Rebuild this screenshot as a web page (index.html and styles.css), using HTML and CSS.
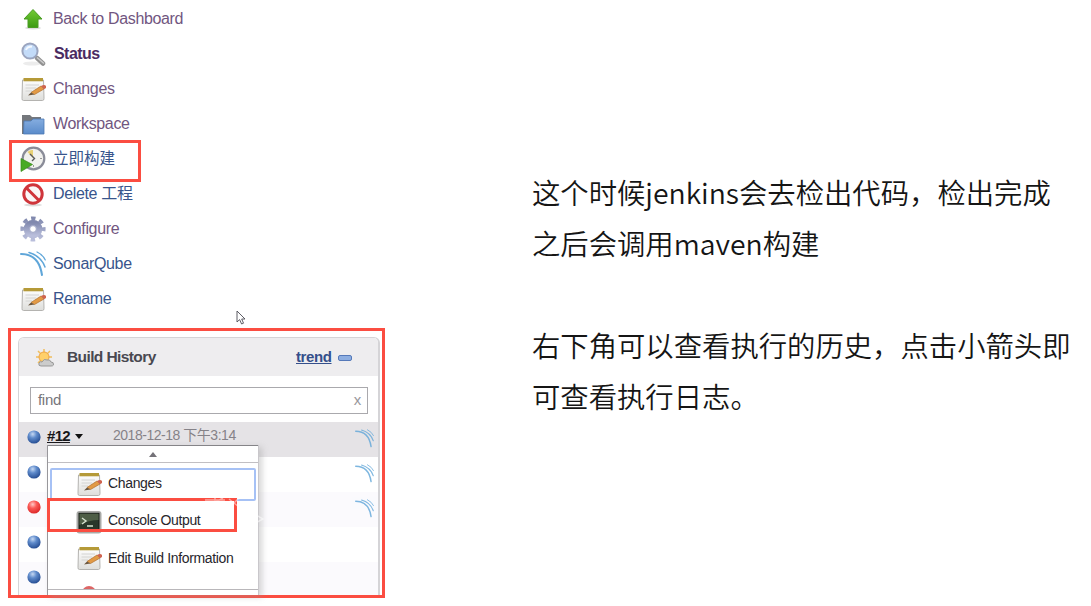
FILE: index.html
```
<!DOCTYPE html>
<html lang="zh-CN">
<head>
<meta charset="utf-8">
<title>Jenkins</title>
<link rel="stylesheet" href="styles.css">
</head>
<body>
<svg class="defs" width="0" height="0" aria-hidden="true">
  <defs>
    <linearGradient id="green" x1="0" y1="0" x2="0" y2="1"><stop offset="0" stop-color="#72cb35"/><stop offset="1" stop-color="#3c9a12"/></linearGradient>
    <linearGradient id="folder" x1="0" y1="0" x2="0" y2="1"><stop offset="0" stop-color="#85ade0"/><stop offset="1" stop-color="#5a8bca"/></linearGradient>
    <linearGradient id="paper" x1="0" y1="0" x2="0" y2="1"><stop offset="0" stop-color="#fdfdfd"/><stop offset="1" stop-color="#dededb"/></linearGradient>
    <linearGradient id="gear" x1="0" y1="0" x2="0" y2="1"><stop offset="0" stop-color="#8189ae"/><stop offset="1" stop-color="#b9bedb"/></linearGradient>
    <radialGradient id="blue" cx=".4" cy=".28" r=".75"><stop offset="0" stop-color="#c5d8f3"/><stop offset=".4" stop-color="#5f8bcb"/><stop offset="1" stop-color="#234a90"/></radialGradient>
    <radialGradient id="red" cx=".4" cy=".3" r=".75"><stop offset="0" stop-color="#ffc9c6"/><stop offset=".4" stop-color="#fb5a56"/><stop offset="1" stop-color="#d92323"/></radialGradient>
    <symbol id="note" viewBox="0 0 26 26">
      <path d="M2.500 4H23.500L24 22.500Q24 24.500 22.500 24.500H3.500Q1.800 24.500 2 22.500Z" fill="url(#paper)" stroke="#b4b3b0"/>
      <path d="M3.500 2H23V5.300H3.500Z" fill="#b59a38"/>
      <path d="M5.500 9H19M5.500 12H16M5.500 15H12" stroke="#d4d4d2"/>
      <path d="M11 16.500L21 10L24 13L14.500 18.500Z" fill="#e29a45" stroke="#b0702c" stroke-width=".7"/>
      <path d="M21 10Q24.500 8 26 10V12L24 13.200Z" fill="#cf6450"/>
      <path d="M8 19.500L11 16.500L14.500 18.500Z" fill="#6c573f"/>
    </symbol>
    <symbol id="sonar" viewBox="0 0 26 26"><g fill="none" stroke="#5fa6d9" stroke-linecap="round"><path d="M1 3Q19 3 22 24" stroke-width="2"/><path d="M9 1.500Q21 5 25 16" stroke-width="1.500"/><path d="M17 1Q23 4 25.300 9" stroke-width="1.200"/></g></symbol>
    <symbol id="ball-blue" viewBox="0 0 14 14"><circle cx="7" cy="7" r="6.600" fill="url(#blue)"/></symbol>
    <symbol id="ball-red" viewBox="0 0 14 14"><circle cx="7" cy="7" r="6.600" fill="url(#red)"/></symbol>
  </defs>
</svg>
<main class="slide">
  <section class="side">
    <nav class="tasks">
      <a class="task visited"><svg class="icon" viewBox="0 0 26 26"><ellipse cx="13" cy="22" rx="8" ry="1.500" fill="#ddd"/><path d="M13 3.500L22 13H18V21.500H8V13H4Z" fill="url(#green)" stroke="#4a9c24"/></svg><span>Back to Dashboard</span></a>
      <a class="task current"><svg class="icon" viewBox="0 0 26 26"><ellipse cx="12" cy="22.500" rx="9" ry="2" fill="#ececec"/><path d="M17 17L23 22.500" stroke="#929292" stroke-width="4.500" stroke-linecap="round"/><path d="M17 16.500L24 22.500" stroke="#ccc" stroke-width="1.500"/><circle cx="10" cy="10" r="7.600" fill="#c3dbf8" stroke="#9ba5bf" stroke-width="2"/><path d="M6 9Q7 5.500 12 5.500" fill="none" stroke="#f4f9ff" stroke-width="2"/></svg><span class="t-status">Status</span></a>
      <a class="task visited"><svg class="icon"><use href="#note"/></svg><span>Changes</span></a>
      <a class="task visited"><svg class="icon" viewBox="0 0 26 26"><path d="M2 4H10L12 6H21V23H2Z" fill="#74777c"/><path d="M4 10L11 10L13 8H24V23H3.500Z" fill="url(#folder)" stroke="#4b78b4" stroke-width=".8"/></svg><span>Workspace</span></a>
      <a class="task"><svg class="icon" viewBox="0 0 26 26"><circle cx="13.500" cy="12.500" r="10.800" fill="#f1f1ee" stroke="#8a8c98" stroke-width="2.200"/><path d="M13 12L7.500 6Q10 3.500 13 4Z" fill="#e8d174"/><path d="M10 8L14.500 12.500L12 15" fill="none" stroke="#5a5a5a" stroke-width="1.400"/><path d="M20 12.500H22M13.500 19V21" stroke="#999"/><path d="M1 12.500L12.500 18.500L1 25.500Z" fill="#48aa24" stroke="#388919" stroke-width=".7"/></svg><span class="t-cjk">立即构建</span></a>
      <a class="task"><svg class="icon" viewBox="0 0 26 26"><ellipse cx="13" cy="24" rx="9" ry="1.400" fill="#ddd"/><circle cx="13" cy="13" r="9.200" fill="#faf7f7" stroke="#cf353b" stroke-width="3"/><path d="M6.500 7L19 19.500" stroke="#cf353b" stroke-width="3"/></svg><span>Delete 工程</span></a>
      <a class="task visited"><svg class="icon" viewBox="0 0 26 26"><g fill="none" stroke="url(#gear)"><circle cx="13" cy="13" r="6.300" stroke-width="6"/><circle cx="13" cy="13" r="10.700" stroke-width="3.800" stroke-dasharray="4.400 4" stroke-dashoffset="2.200"/></g><circle cx="13" cy="13" r="3.400" fill="#fff" stroke="#9aa1c3"/></svg><span>Configure</span></a>
      <a class="task"><svg class="icon"><use href="#sonar"/></svg><span>SonarQube</span></a>
      <a class="task"><svg class="icon"><use href="#note"/></svg><span>Rename</span></a>
    </nav>
    <section class="frame">
      <div class="history">
        <header class="head">
          <svg class="weather" viewBox="0 0 20 20"><path d="M9 1V17M1 9H17M3 3L15 15M15 3L3 15" stroke="#f0bd5d" stroke-width="1.500"/><circle cx="9" cy="9" r="5" fill="#ffd06a" stroke="#efa544"/><path d="M6 18Q3 18 4 15Q5 13 7 14Q9 10 12 12Q15 11 16 14Q19 14 18.500 17Q18 18 16 18Z" fill="#ccc" stroke="#999"/></svg>
          <h2>Build History</h2><a class="trend">trend</a><i class="collapse"></i>
        </header>
        <div class="search"><div class="field"><span>find</span><span class="clear">x</span></div></div>
        <div class="row active"><svg class="ball"><use href="#ball-blue"/></svg><b>#12</b><i class="caret"></i><time>2018-12-18 下午3:14</time><svg class="wave"><use href="#sonar"/></svg></div>
        <div class="row"><svg class="ball"><use href="#ball-blue"/></svg><svg class="wave"><use href="#sonar"/></svg></div>
        <div class="row alt"><svg class="ball"><use href="#ball-red"/></svg><svg class="wave"><use href="#sonar"/></svg></div>
        <div class="row"><svg class="ball"><use href="#ball-blue"/></svg></div>
        <div class="row alt"><svg class="ball"><use href="#ball-blue"/></svg></div>
      </div>
      <div class="menu">
        <div class="scroll"><i></i></div>
        <div class="item focus"><svg class="icon"><use href="#note"/></svg><span>Changes</span></div>
        <div class="item console"><svg class="icon" viewBox="0 0 26 26"><rect x=".5" y="2" width="25" height="22.500" rx="3" fill="#a9aaa7"/><rect x="3" y="4.300" width="20" height="16.500" fill="#29372a" stroke="#161b15"/><path d="M3.500 4.800H22.500V11Q13 11 3.500 16Z" fill="#4e5e46"/><path d="M6 9L10 12L6 15M11 17H17" fill="none" stroke="#d7e3d1" stroke-width="1.400"/></svg><span>Console Output</span></div>
        <div class="item edit"><svg class="icon"><use href="#note"/></svg><span>Edit Build Information</span></div>
        <div class="peek"><i></i></div>
        <div class="bottom"></div>
      </div>
      <div class="mark mark-console"></div>
      <svg class="ghost" viewBox="0 0 65 32"><path d="M2 5H22M12 1V12M4 12L20 3M26 4L36 12M36 3L26 13M36 18L47 22L38 27M48 17L60 24L49 30" fill="none" stroke="#fff" stroke-opacity=".5" stroke-width="1.500"/></svg>
    </section>
    <div class="mark mark-build"></div>
    <svg class="cursor" viewBox="0 0 10 15"><path d="M1 1V12L3.600 9.600L5.600 14L7.500 13.200L5.700 9H9Z" fill="#fff" stroke="#4c4c55" stroke-width=".9"/></svg>
  </section>
  <article class="notes">
    <p>这个时候jenkins会去检出代码，检出完成<br>之后会调用maven构建</p>
    <p>右下角可以查看执行的历史，点击小箭头即<br>可查看执行日志。</p>
  </article>
</main>
</body>
</html>
```
FILE: styles.css
```
* { box-sizing: border-box; }
body { margin: 0; background: #fff; font-family: "Liberation Sans", "Noto Sans CJK SC", sans-serif; }
.defs { position: absolute; }
.slide { display: flex; width: 1091px; height: 606px; overflow: hidden; }
.side { position: relative; width: 532px; flex: none; }
.tasks { height: 328px; padding-top: 1px; }
.task { display: flex; align-items: center; height: 35px; padding-left: 20px; gap: 7px; font-size: 16px; letter-spacing: -0.35px; line-height: 20px; color: #38558c; white-space: nowrap; }
.task.visited { color: #71567f; }
.task.current { color: #4b2b62; font-weight: bold; }
.icon { width: 26px; height: 26px; flex: none; }
.task .t-status { padding-left: 1px; letter-spacing: -0.55px; }
.task .t-cjk { font-size: 15.5px; letter-spacing: 0; }
.frame { position: relative; margin-left: 8px; width: 377px; height: 270px; border: 3px solid #fb4d41; padding: 6px 2px 0 7px; }
.history { height: 258px; border: 1px solid #d5d4d7; border-width: 1px 2px 0 1px; border-radius: 6px 6px 0 0; overflow: hidden; }
.head { display: flex; align-items: center; height: 38px; padding: 0 0 1px 16px; background: #eeedef; }
.weather { width: 20px; height: 20px; margin-top: 3px; }
h2 { margin: 0 0 0 12px; width: 229px; font-size: 15.5px; letter-spacing: -0.6px; color: #494850; white-space: nowrap; }
.trend { font-size: 15px; letter-spacing: -0.4px; font-weight: bold; text-decoration: underline; color: #344f8b; }
.collapse { width: 14px; height: 6px; margin: 3px 0 0 6px; border: 1px solid #5579b9; border-radius: 2px; background: #8daee1; }
.search { height: 46px; padding: 11px 10px 0 11px; }
.field { display: flex; justify-content: space-between; align-items: center; height: 27px; padding: 0 6px 2px 7px; border: 1px solid #aaa9ad; font-size: 15px; letter-spacing: -0.3px; color: #77757b; }
.clear { color: #99979c; }
.row { display: flex; align-items: center; height: 35px; padding: 0 4px 6px 8px; background: #fff; }
.row.active { background: #e5e3e6; }
.row.alt { background: #fbfafd; }
.ball { width: 14px; height: 14px; flex: none; }
.row b { margin: -2px 0 0 6px; font-size: 15px; text-decoration: underline; color: #18171a; letter-spacing: -0.7px; }
.caret { margin: -1px 0 0 5px; border: 4px solid transparent; border-top: 5px solid #111; border-bottom: 0; }
time { margin: -5px 0 0 30px; font-size: 14px; color: #858288; white-space: nowrap; letter-spacing: -0.47px; }
.wave { width: 19px; height: 19px; margin-left: auto; margin-top: 4px; opacity: .8; }
.menu { position: absolute; left: 36px; top: 114px; width: 212px; height: 150px; background: #fff; box-shadow: 3px 2px 6px #9996; border-left: 1px solid #98979b; border-right: 1px solid #c9c7cb; overflow: hidden; }
.scroll { display: flex; align-items: center; justify-content: center; height: 18px; border: 1px solid #858488; border-width: 1px 0; border-bottom-color: #c1bfc3; }
.scroll i { border: 4px solid transparent; border-bottom: 5px solid #747278; border-top: 0; }
.item { display: flex; align-items: center; padding-left: 28px; gap: 6px; font-size: 14px; letter-spacing: -0.35px; color: #27262c; white-space: nowrap; }
.item.focus { margin: 5px 2px 0; height: 33px; padding: 0 0 3px 24px; border: 2px solid #a6c1f5; border-radius: 2px; }
.item.focus .icon { margin-top: 2px; }
.item.console { height: 38px; }
.item.console .icon { margin-top: 4px; }
.item.edit { height: 38px; }
.peek { display: flex; justify-content: center; height: 12px; padding: 9px 129px 0 0; overflow: hidden; }
.peek i { width: 14px; height: 14px; flex: none; border-radius: 50%; background: #dd6565; }
.bottom { height: 6px; border-top: 1px solid #b9b7ba; }
.mark { position: absolute; border: 3px solid #fb4d41; }
.mark-build { left: 9px; top: 140px; width: 132px; height: 42px; }
.mark-console { left: 36px; top: 167px; width: 190px; height: 34px; }
.ghost { position: absolute; left: 192px; top: 164px; width: 65px; height: 32px; }
.cursor { position: absolute; left: 236px; top: 310px; width: 10px; height: 15px; }
.notes { padding-top: 166px; font-family: "Noto Sans CJK SC DemiLight", "Noto Sans CJK SC", sans-serif; font-weight: 350; font-size: 28.35px; line-height: 51px; color: #151515; white-space: nowrap; }
.notes p { margin: 0 0 51px; }
```
